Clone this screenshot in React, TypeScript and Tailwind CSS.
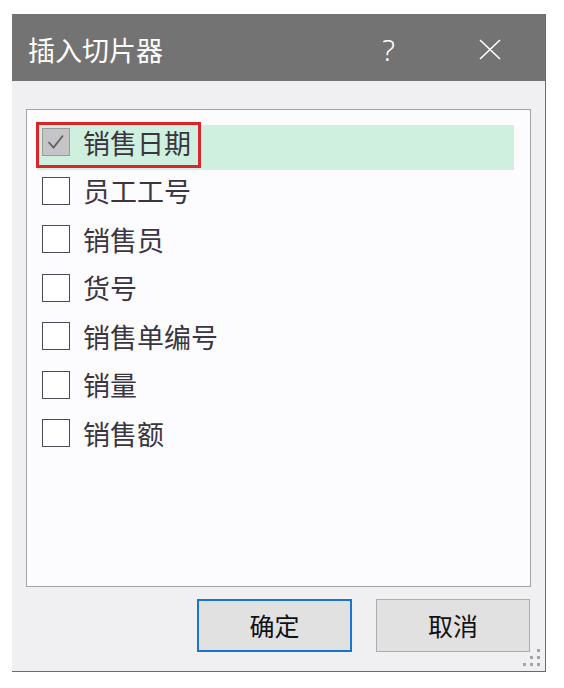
const fields = ['销售日期', '员工工号', '销售员', '货号', '销售单编号', '销量', '销售额']

function CheckBox({ checked }: { checked?: boolean }) {
  if (checked) {
    return (
      <div className="flex h-[28px] w-[28px] shrink-0 items-center justify-center border-[1.5px] border-[#9b9b9b] bg-[#c5c5c7]">
        <svg width="22" height="22" viewBox="0 0 22 22" fill="none">
          <path d="M3.5 11 L8.5 16.5 L18 4.5" stroke="#606064" strokeWidth="1.8" />
        </svg>
      </div>
    )
  }
  return <div className="h-[28px] w-[28px] shrink-0 border-[1.5px] border-[#4f4b55] bg-white" />
}

export default function App() {
  return (
    <div className="min-h-screen bg-white pl-[12px] pt-[14px] font-['Noto_Sans_CJK_SC',sans-serif]">
      <div className="flex h-[658px] w-[534px] flex-col border-r border-b border-[#6e6872] bg-[#f0f0f2]">
        <div className="flex h-[67px] shrink-0 items-center bg-[#737373] pl-[16px] pt-[4px] text-white">
          <span className="text-[27px] leading-none">插入切片器</span>
          <span className="ml-auto mr-[84px] font-['Noto_Sans',sans-serif] text-[30px] font-light leading-none">?</span>
          <svg className="mr-[44px]" width="22" height="21" viewBox="0 0 22 21" fill="none">
            <path d="M1 1 L21 20 M21 1 L1 20" stroke="white" strokeWidth="1.6" />
          </svg>
        </div>

        <div className="ml-[14px] mr-[14px] mt-[28px] flex h-[478px] flex-col border border-[#a3a3a6] bg-[#fcfcfe] pl-[15px] pt-[8px]">
          {fields.map((name, i) => (
            <div key={name} className="relative flex h-[48.5px] shrink-0 items-center">
              {i === 0 && (
                <>
                  <div className="absolute left-[-5px] top-[7px] h-[45px] w-[477px] bg-[#d0f0df]" />
                  <div className="absolute left-[-6px] top-[4px] h-[46px] w-[165px] border-[3px] border-[#d9252b]" />
                </>
              )}
              <div className="relative flex items-center gap-[13px]">
                <CheckBox checked={i === 0} />
                <span className="text-[27px] leading-none text-[#3a3540]">{name}</span>
              </div>
            </div>
          ))}
        </div>

        <div className="relative mt-[12px] flex justify-end gap-[24px] pr-[15px]">
          <button className="flex h-[53px] w-[155px] items-center justify-center border-2 border-[#1a74d2] bg-[#e1e1e1] text-[25px] text-[#111]">
            确定
          </button>
          <button className="flex h-[53px] w-[154px] items-center justify-center border border-[#adadad] bg-[#e1e1e1] text-[25px] text-[#111]">
            取消
          </button>
          <div className="absolute bottom-[-14px] right-[5px] grid grid-cols-3 gap-[4px]">
            {[0, 0, 1, 0, 1, 1, 1, 1, 1].map((v, k) => (
              <div key={k} className={v ? 'h-[3px] w-[3px] bg-[#a4a4a8]' : 'h-[3px] w-[3px]'} />
            ))}
          </div>
        </div>
      </div>
    </div>
  )
}
